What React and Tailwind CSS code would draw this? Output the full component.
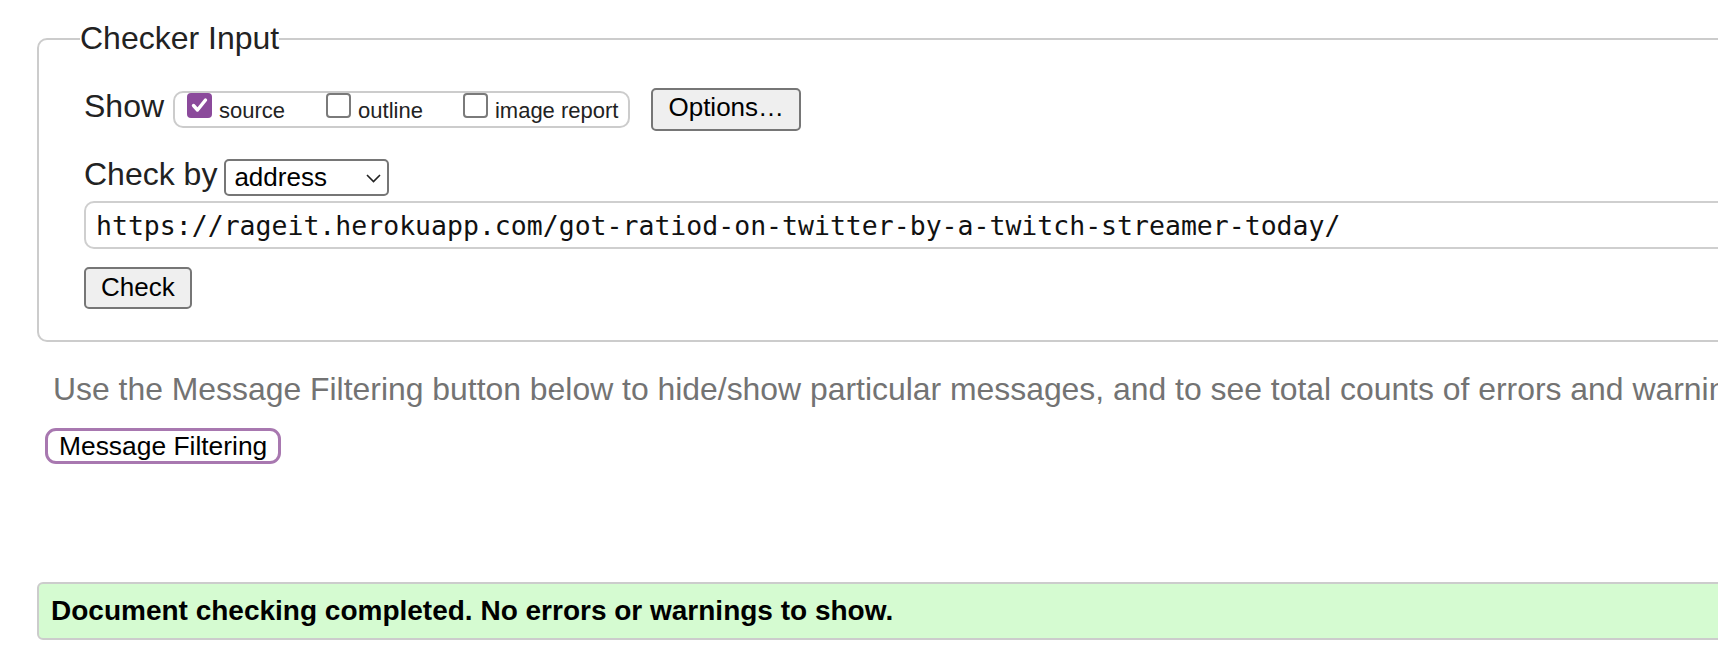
import React from 'react'

const sans = "font-['Liberation_Sans',Arial,sans-serif]"

function Box({ checked, label }) {
  return (
    <div className="flex items-start">
      {checked ? (
        <span className="w-[25px] h-[25px] shrink-0 rounded-[4px] bg-[#8b4a9b] flex items-center justify-center">
          <svg width="25" height="25" viewBox="0 0 25 25">
            <path d="M6.5 12.5 L10.5 17 L18.5 7" fill="none" stroke="#fff" strokeWidth="3.4" strokeLinecap="round" strokeLinejoin="round" />
          </svg>
        </span>
      ) : (
        <span className="w-[25px] h-[25px] shrink-0 rounded-[4px] border-2 border-[#7a7a7a] bg-white" />
      )}
      <span className="ml-[7px] mt-[5px] text-[22px] leading-[normal] text-[#222]">{label}</span>
    </div>
  )
}

export default function App() {
  return (
    <div className={`w-[1718px] h-[650px] overflow-hidden bg-white ${sans}`}>
      <div className="w-[2000px] pl-[37px]">
        <fieldset className="mt-[20px] w-[1900px] border-2 border-[#cccccc] rounded-[10px] pl-[45px] pt-[31px] pb-[31px]">
          <legend className="ml-[-4px] text-[32px] leading-[normal] text-[#222]">Checker Input</legend>

          <div className="flex items-start h-[43px]">
            <span className="text-[32px] leading-[normal] text-[#222]">Show</span>
            <div className="ml-[9px] mt-[3px] h-[37px] border-2 border-[#cccccc] rounded-[10px] flex items-start pl-[12px] pr-[10px]">
              <Box checked label="source" />
              <div className="ml-[41px]"><Box label="outline" /></div>
              <div className="ml-[40px]"><Box label="image report" /></div>
            </div>
            <button className="ml-[21px] h-[43px] px-[15px] pt-[2px] flex items-start border-2 border-[#767676] rounded-[5px] bg-[#efefef] text-[26px] leading-[normal] text-black">
              Options…
            </button>
          </div>

          <div className="mt-[25px] flex items-start">
            <span className="text-[32px] leading-[normal] text-[#222]">Check by</span>
            <div className="ml-[7px] mt-[3px] w-[165px] h-[37px] border-2 border-[#767676] rounded-[5px] bg-white flex items-center justify-between pl-[8px] pr-[6px]">
              <span className="text-[26px] leading-[normal] text-black">address</span>
              <svg width="15" height="9" viewBox="0 0 15 9" className="mt-[2px]">
                <path d="M1 1 L7.5 7.5 L14 1" fill="none" stroke="#222" strokeWidth="1.6" />
              </svg>
            </div>
          </div>

          <div className="mt-[5px] h-[48px] border-2 border-[#cfcfcf] rounded-[10px] flex items-center pl-[10px] bg-white">
            <span className="text-[26.5px] leading-[normal] text-[#111] whitespace-nowrap font-['DejaVu_Sans_Mono',monospace]">
              https://rageit.herokuapp.com/got-ratiod-on-twitter-by-a-twitch-streamer-today/
            </span>
          </div>

          <button className="mt-[18px] h-[42px] px-[15px] pt-[3px] flex items-start border-2 border-[#767676] rounded-[5px] bg-[#efefef] text-[26px] leading-[normal] text-black">
            Check
          </button>
        </fieldset>

        <p className="mt-[29px] ml-[16px] text-[31.9px] leading-[normal] text-[#737373] whitespace-nowrap">
          Use the Message Filtering button below to hide/show particular messages, and to see total counts of errors and warnings.
        </p>

        <button className="mt-[20px] ml-[8px] h-[36px] px-[11px] flex items-start border-[3px] border-[#a878b0] rounded-[11px] bg-white text-[26.4px] leading-[normal] text-black">
          Message Filtering
        </button>

        <div className="mt-[118px] w-[1900px] h-[58px] border-2 border-[#cccccc] rounded-[6px] bg-[#d5fbd1] flex items-center pl-[12px]">
          <span className="text-[28px] font-bold leading-[normal] text-black">
            Document checking completed. No errors or warnings to show.
          </span>
        </div>
      </div>
    </div>
  )
}
